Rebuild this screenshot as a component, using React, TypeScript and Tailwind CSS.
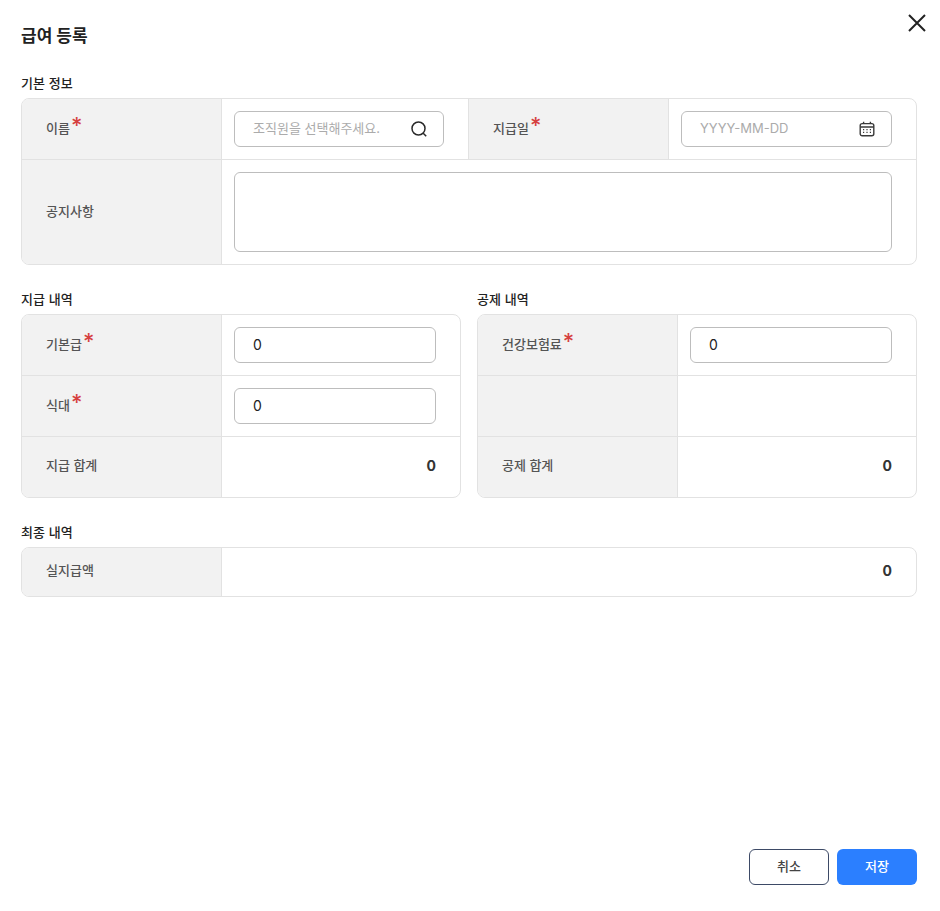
import type { ReactNode } from "react";

const FONT = "font-['Inter','Noto_Sans_CJK_KR','Noto_Sans',sans-serif]";

function Label({ children, required, raised }: { children: ReactNode; required?: boolean; raised?: boolean }) {
  return (
    <div className={`flex w-[200px] shrink-0 items-center border-r border-[#e2e2e2] bg-[#f2f2f2] pl-[24px] text-[13px] font-medium text-[#555] ${raised ? "pb-[2px]" : ""}`}>
      <span>{children}</span>
      {required && <span className="mb-[8px] ml-[1px] text-[22px] leading-none font-medium text-[#d6403f]">*</span>}
    </div>
  );
}

function Row({ children, height, last }: { children: ReactNode; height: string; last?: boolean }) {
  return <div className={`flex ${height} ${last ? "" : "border-b border-[#e2e2e2]"}`}>{children}</div>;
}

function Field({ width, children }: { width: string; children: ReactNode }) {
  return (
    <div className={`flex h-[36px] ${width} items-center justify-between rounded-[6px] border border-[#bdbdbd] bg-white pr-[15px] pb-[1px] pl-[18px] text-[14px] text-[#222]`}>
      {children}
    </div>
  );
}

function Heading({ children }: { children: ReactNode }) {
  return <h2 className="mb-[5px] h-[20px] pt-[1px] text-[13px] leading-[19px] font-medium tracking-[0.01em] text-[#222]">{children}</h2>;
}

function Amount({ value }: { value: string }) {
  return <div className="flex flex-1 items-center justify-end pr-[24px] pb-[3px] text-[14px] font-bold text-[#333]">{value}</div>;
}

function Panel({ children }: { children: ReactNode }) {
  return <div className="overflow-hidden rounded-[8px] border border-[#e2e2e2]">{children}</div>;
}

export default function App() {
  return (
    <div className={`relative flex h-[911px] w-[940px] flex-col bg-white pt-[23px] pr-[23px] pb-[26px] pl-[21px] ${FONT}`}>
      <button className="absolute top-[13px] left-[907px] text-[#222]" aria-label="닫기">
        <svg width="20" height="20" viewBox="0 0 20 20" fill="none" stroke="currentColor" strokeWidth="2">
          <path d="M2 2L18 18M18 2L2 18" />
        </svg>
      </button>

      <h1 className="mb-[24px] h-[26px] text-[17px] leading-[26px] font-bold text-[#222]">급여 등록</h1>

      {/* 기본 정보 */}
      <Heading>기본 정보</Heading>
      <Panel>
        <Row height="h-[61px]">
          <Label required>이름</Label>
          <div className="flex w-[247px] items-center border-r border-[#e2e2e2] pl-[12px]">
            <Field width="w-[210px]">
              <span className="text-[13px] text-[#ababab]">조직원을 선택해주세요.</span>
              <svg width="18" height="18" viewBox="0 0 18 18" fill="none" stroke="#2a2a2a" strokeWidth="1.5" className="mt-[1px] shrink-0">
                <circle cx="8.5" cy="8.5" r="6.5" />
                <path d="M13.2 13.2L16.2 16.2" />
              </svg>
            </Field>
          </div>
          <Label required>지급일</Label>
          <div className="flex flex-1 items-center pl-[12px]">
            <Field width="w-[211px]">
              <span className="text-[13px] text-[#ababab]">YYYY-MM-DD</span>
              <svg width="16" height="16" viewBox="0 0 16 16" fill="none" stroke="#3a3a3a" strokeWidth="1.4" className="mt-[1px] mr-[1px] shrink-0">
                <rect x="1.2" y="2.6" width="13.6" height="12.2" rx="2" />
                <path d="M1.2 6H14.8M4.6 0.8V3M11.4 0.8V3" />
                <path d="M4 8.6H5.2M7.4 8.6H8.6M10.8 8.6H12M4 11.4H5.2M7.4 11.4H8.6M10.8 11.4H12" strokeWidth="1.1" />
              </svg>
            </Field>
          </div>
        </Row>
        <Row height="h-[104px]" last>
          <Label>공지사항</Label>
          <div className="flex flex-1 items-center pl-[12px]">
            <div className="h-[80px] w-[658px] rounded-[6px] border border-[#bdbdbd] bg-white" />
          </div>
        </Row>
      </Panel>

      {/* 지급 / 공제 */}
      <div className="mt-[24px] flex gap-[16px]">
        <div className="w-[440px]">
          <Heading>지급 내역</Heading>
          <Panel>
            <Row height="h-[61px]">
              <Label required>기본급</Label>
              <div className="flex flex-1 items-center pl-[12px]">
                <Field width="w-[202px]">0</Field>
              </div>
            </Row>
            <Row height="h-[61px]">
              <Label required>식대</Label>
              <div className="flex flex-1 items-center pl-[12px]">
                <Field width="w-[202px]">0</Field>
              </div>
            </Row>
            <Row height="h-[60px]" last>
              <Label raised>지급 합계</Label>
              <Amount value="0" />
            </Row>
          </Panel>
        </div>
        <div className="w-[440px]">
          <Heading>공제 내역</Heading>
          <Panel>
            <Row height="h-[61px]">
              <Label required>건강보험료</Label>
              <div className="flex flex-1 items-center pl-[12px]">
                <Field width="w-[202px]">0</Field>
              </div>
            </Row>
            <Row height="h-[61px]">
              <Label>{""}</Label>
              <div className="flex-1" />
            </Row>
            <Row height="h-[60px]" last>
              <Label raised>공제 합계</Label>
              <Amount value="0" />
            </Row>
          </Panel>
        </div>
      </div>

      {/* 최종 내역 */}
      <div className="mt-[24px]">
        <Heading>최종 내역</Heading>
        <Panel>
          <Row height="h-[48px]" last>
            <Label raised>실지급액</Label>
            <Amount value="0" />
          </Row>
        </Panel>
      </div>

      <div className="mt-auto flex justify-end gap-[8px]">
        <button className="h-[36px] w-[80px] rounded-[6px] border border-[#3d4a66] bg-white text-[13px] font-medium text-[#444]">취소</button>
        <button className="h-[36px] w-[80px] rounded-[6px] bg-[#2b7fff] text-[13px] font-medium text-white">저장</button>
      </div>
    </div>
  );
}
